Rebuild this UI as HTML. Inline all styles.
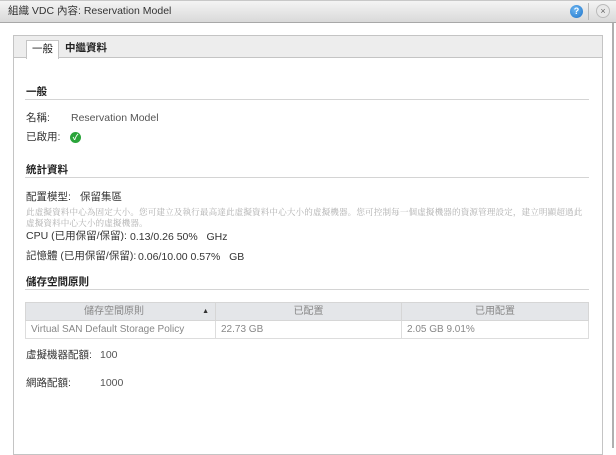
<!DOCTYPE html>
<html><head><meta charset="utf-8"><style>
*{margin:0;padding:0;box-sizing:border-box}
body{width:616px;height:448px;overflow:hidden;background:#fff;font-family:"Liberation Sans","Noto Sans CJK TC",sans-serif;font-size:10.5px;line-height:13px;color:#333;position:relative}
.title{position:absolute;left:0;top:0;width:616px;height:23px;background:linear-gradient(#f4f4f4,#d9d9d9);border-bottom:1px solid #a8a8a8;border-top:1px solid #c8c8c8}
.title span{position:absolute;left:8px;top:4px;font-size:10.5px;line-height:13px;color:#333}
.help{position:absolute;left:570px;top:5px;width:13px;height:13px;border-radius:50%;background:radial-gradient(circle at 40% 35%,#6cb6f2,#1f74c9);color:#fff;font-size:9px;font-weight:bold;text-align:center;line-height:13px}
.sep{position:absolute;left:588px;top:3px;width:1px;height:17px;background:#b8b8b8}
.close{position:absolute;left:596px;top:4px;width:14px;height:14px;border-radius:50%;background:#e8e8e8;border:1px solid #bbb;color:#666;font-size:9px;text-align:center;line-height:12px}
.rb{position:absolute;left:612px;top:23px;width:2px;height:425px;background:#b0b0b0}
.panel{position:absolute;left:13px;top:35px;width:590px;height:420px;border:1px solid #c4c4c4}
.tabs{position:absolute;left:0;top:0;width:588px;height:22px;background:#ededed;border-bottom:1px solid #c4c4c4}
.tab1{position:absolute;left:12px;top:4px;width:33px;height:19px;background:#fff;border:1px solid #c4c4c4;border-bottom:none;text-align:center;line-height:17px;color:#222}
.tab2{position:absolute;left:51px;top:4px;line-height:17px;color:#222;font-weight:bold}
.abs{position:absolute;white-space:nowrap}
.h{font-weight:bold;color:#222}
.hr{position:absolute;left:25px;width:564px;height:1px;background:#d4d4d4}
.g{color:#555}
table{position:absolute;left:25px;top:302px;width:564px;border-collapse:collapse;font-size:10px;line-height:12px}
th{background:#e4e6e9;color:#888;font-weight:normal;height:18px;border:1px solid #d6d6d6;text-align:center}
td{height:18px;border:1px solid #ddd;color:#888;padding-left:5px}
</style></head><body>
<div class="title"><span>組織 VDC 內容: Reservation Model</span></div>
<div class="help">?</div><div class="sep"></div><div class="close">×</div>
<div class="rb"></div>
<div class="panel"><div class="tabs"><div class="tab1">一般</div><div class="tab2">中繼資料</div></div></div>
<div class="abs h" style="left:26px;top:86px">一般</div>
<div class="hr" style="top:99px"></div>
<div class="abs" style="left:26px;top:112px">名稱:</div>
<div class="abs g" style="left:71px;top:112px">Reservation Model</div>
<div class="abs" style="left:26px;top:131px">已啟用:</div>
<div class="abs" style="left:70px;top:132px;width:11px;height:11px;border-radius:50%;background:#2aa43a;color:#fff;font-size:8px;text-align:center;line-height:11px;font-weight:bold">✓</div>
<div class="abs h" style="left:26px;top:164px">統計資料</div>
<div class="hr" style="top:177px"></div>
<div class="abs" style="left:26px;top:191px">配置模型:</div>
<div class="abs" style="left:80px;top:191px">保留集區</div>
<div class="abs" style="left:26px;top:207px;width:562px;white-space:normal;font-family:'Noto Serif CJK SC',serif;font-size:8.6px;line-height:11px;color:#b0b0b0;letter-spacing:0.1px">此虛擬資料中心為固定大小。您可建立及執行最高達此虛擬資料中心大小的虛擬機器。您可控制每一個虛擬機器的資源管理設定，建立明顯超過此虛擬資料中心大小的虛擬機器。</div>
<div class="abs" style="left:26px;top:230px">CPU (已用保留/保留):</div>
<div class="abs" style="left:130px;top:231px">0.13/0.26 50% &nbsp; GHz</div>
<div class="abs" style="left:26px;top:250px">記憶體 (已用保留/保留):</div>
<div class="abs" style="left:138px;top:251px">0.06/10.00 0.57% &nbsp; GB</div>
<div class="abs h" style="left:26px;top:276px">儲存空間原則</div>
<div class="hr" style="top:289px"></div>
<table><tr><th style="width:190px">儲存空間原則 <span style="float:right;margin-right:6px;color:#333;font-size:7px">▲</span></th><th style="width:186px">已配置</th><th>已用配置</th></tr>
<tr><td>Virtual SAN Default Storage Policy</td><td>22.73 GB</td><td>2.05 GB 9.01%</td></tr></table>
<div class="abs" style="left:26px;top:349px">虛擬機器配額:</div>
<div class="abs g" style="left:100px;top:349px">100</div>
<div class="abs" style="left:26px;top:377px">網路配額:</div>
<div class="abs g" style="left:100px;top:377px">1000</div>
</body></html>
